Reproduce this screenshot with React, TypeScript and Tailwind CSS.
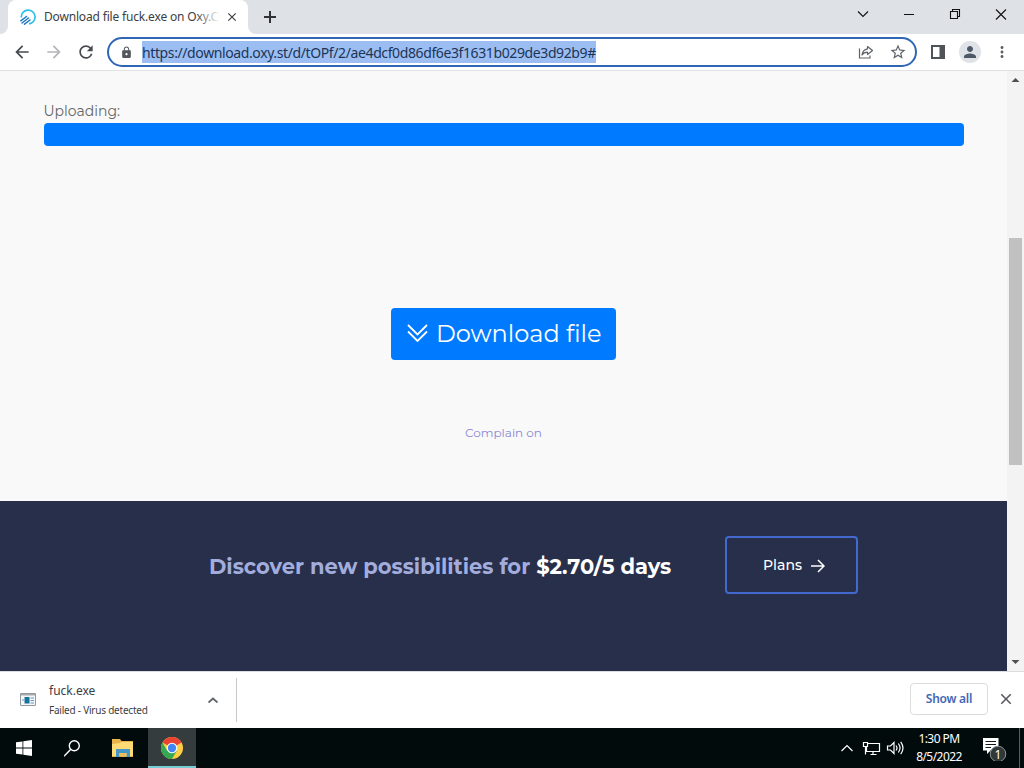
import React from 'react';
import {
  MdArrowBack,
  MdArrowForward,
  MdClose,
  MdLock,
  MdMoreVert,
  MdPerson,
  MdRefresh,
  MdStarBorder,
} from 'react-icons/md';

function SiteLogo() {
  return (
    <svg width="16" height="16" viewBox="0 0 16 16" fill="none" className="shrink-0">
      <path d="M1.300 8.500A6.900 6.900 0 1 1 9 14.800" stroke="#2cc0ea" strokeWidth="1.700" />
      <path d="M.8 11.800L6.500 7.500M2 14l6.500-5M4.500 15.200l5.500-4.200" stroke="#2079c2" strokeWidth="1.500" strokeLinecap="round" />
    </svg>
  );
}

function ShareIcon() {
  return (
    <svg width="16" height="16" viewBox="0 0 16 16" fill="none" stroke="#5f6368" strokeWidth="1.2">
      <path d="M1.500 4.500v9.500h10.500v-2.500" />
      <path d="M9.500 2.500l5 4-5 4V8.200c-2.500 0-4.200.8-5.500 2.800.4-3.500 2.200-5.600 5.500-6.200z" strokeLinejoin="round" />
    </svg>
  );
}

function TabStrip() {
  return (
    <div className="flex h-[34px] bg-[#dee1e6]">
      <div className="w-[8px] bg-white">
        <div className="h-full w-full rounded-br-lg bg-[#dee1e6]" />
      </div>
      <div className="bg-[#dee1e6]">
        <div className="flex h-full w-[240px] items-center rounded-t-lg bg-white pl-3">
          <SiteLogo />
          <div className="relative ml-2 w-[176px] overflow-hidden text-[12px] tracking-[-0.17px] whitespace-nowrap text-[#3c4043]">
            Download file fuck.exe on Oxy.Cl
            <div className="absolute inset-y-0 right-0 w-6 bg-linear-to-r from-transparent to-white" />
          </div>
          <MdClose className="ml-[5px] shrink-0 text-[#3c4043]" size={14} />
        </div>
      </div>
      <div className="w-[8px] bg-white">
        <div className="h-full w-full rounded-bl-lg bg-[#dee1e6]" />
      </div>
      <svg className="mt-[10px] ml-[7px]" width="14" height="14" viewBox="0 0 14 14" stroke="#303236" strokeWidth="2">
        <path d="M7 1v12M1 7h12" />
      </svg>
      <div className="ml-auto flex pt-[8px] pr-[16px]">
        <svg width="154" height="14" viewBox="0 0 154 14" fill="none" stroke="#111" strokeWidth="1.1">
          <path d="M4 3.500l5 5 5-5M50 6.500h10" />
          <path d="M96.500 3.500h7v7h-7zM98.500 3.500v-2h7v7h-2" />
          <path d="M142 1.500l10 10M152 1.500l-10 10" />
        </svg>
      </div>
    </div>
  );
}

function Toolbar() {
  return (
    <div className="flex h-[37px] items-center border-b border-[#dfe1e3] bg-white text-[#5f6368]">
      <MdArrowBack className="ml-3 text-[#46494d]" size={20} />
      <MdArrowForward className="ml-3 text-[#b3b5b8]" size={20} />
      <MdRefresh className="ml-3 text-[#46494d]" size={20} />
      <div className="ml-[11px] flex h-[30px] w-[810px] items-center rounded-full border-2 border-[#2f67b5] pl-[11px]">
        <MdLock className="text-[#54575b]" size={13} />
        <div className="ml-[9px] flex h-[22px] w-[454px] items-center bg-[#9bbdf2] text-[14px] tracking-[-0.39px] whitespace-nowrap text-[#1b3558]">
          https://download.oxy.st/d/tOPf/2/ae4dcf0d86df6e3f1631b029de3d92b9#
        </div>
        <div className="mr-[8px] ml-auto flex items-center gap-[15px]">
          <ShareIcon />
          <MdStarBorder size={18} />
        </div>
      </div>
      <svg className="ml-[14px]" width="14" height="14" viewBox="0 0 14 14">
        <path d="M1 1h12v12H1z" fill="none" stroke="#505357" strokeWidth="2" />
        <path d="M8.500 1H13v12H8.500z" fill="#505357" />
      </svg>
      <div className="ml-[14px] flex size-[22px] items-center justify-center rounded-full bg-[#dfe2e7]">
        <MdPerson size={18} className="text-[#4d5966]" />
      </div>
      <MdMoreVert className="ml-[12px]" size={18} />
    </div>
  );
}

function Scrollbar() {
  return (
    <div className="flex w-[17px] flex-col items-center bg-[#f3f3f3]">
      <svg width="17" height="17" viewBox="0 0 17 17">
        <path d="M4.500 11h8l-4-4z" fill="#505050" />
      </svg>
      <div className="mt-[150px] h-[227px] w-[13px] bg-[#c1c1c1]" />
      <svg className="mt-auto" width="17" height="17" viewBox="0 0 17 17">
        <path d="M4.500 6h8l-4 4z" fill="#505050" />
      </svg>
    </div>
  );
}

function Page() {
  return (
    <div className="flex w-[1007px] flex-col bg-[#f9f9f9] font-['Montserrat','Inter',sans-serif]">
      <div className="flex h-[430px] flex-col items-center pt-[29px]">
        <div className="w-[920px]">
          <div className="h-[23px] text-[14px] leading-[22px] tracking-[-0.02px] text-[#666]">Uploading:</div>
          <div className="h-[23px] rounded bg-[#007bff]" />
        </div>
        <button className="mt-[162px] flex h-[52px] w-[225px] items-center rounded bg-[#007bff] pl-[16px] text-[24px] whitespace-nowrap text-white">
          <svg width="22" height="20" viewBox="0 0 22 20" fill="none" stroke="currentColor" strokeWidth="1.8">
            <path d="M1 1l9.500 9.500L20 1M1 7.500l9.500 9.500L20 7.500" />
          </svg>
          <span className="ml-[7px]">Download file</span>
        </button>
        <div className="mt-[63px] text-[12px] leading-[20px] tracking-[-0.01px] text-[#8a87d6]">Complain on</div>
      </div>
      <div className="flex h-[170px] bg-[#282f4b] pt-[35px] pl-[209px]">
        <div className="h-[60px] w-[516px] text-[21px] leading-[62px] font-bold whitespace-nowrap text-[#a3addd]">
          Discover new possibilities for <span className="text-white">$2.70/5 days</span>
        </div>
        <div className="flex h-[58px] w-[133px] items-center rounded border-2 border-[#4169cf] pl-[36px] text-[14px] font-medium text-white">
          <span>Plans</span>
          <svg className="mt-[2px] ml-[9px]" width="14" height="14" viewBox="0 0 14 14" fill="none" stroke="currentColor" strokeWidth="1.5">
            <path d="M0 7h13M7 1l6 6-6 6" />
          </svg>
        </div>
      </div>
    </div>
  );
}

function DownloadShelf() {
  return (
    <div className="flex h-[57px] items-center border-t border-[#dcdde0] bg-white">
      <svg className="-mt-[2px] ml-5" width="16" height="13" viewBox="0 0 16 13">
        <path d="M.5.500h15v12H.500z" fill="#f5f7f8" stroke="#92999e" />
        <path d="M1 1h14v1.500H1z" fill="#a6abae" />
        <path d="M4.500 4h5v6.500h-5z" fill="#16739f" />
        <path d="M10.500 5h3.500M10.500 7.500h3.500M10.500 10h3.500M2 7h2" stroke="#689bc1" />
      </svg>
      <div className="ml-[13px] w-[157px]">
        <div className="text-[12px] leading-[18px] text-[#3c4043]">fuck.exe</div>
        <div className="mt-[2px] text-[10px] leading-[16px] tracking-[-0.22px] text-[#3c4043]">Failed - Virus detected</div>
      </div>
      <svg className="ml-[2px]" width="10" height="6" viewBox="0 0 10 6" fill="none" stroke="#5f6368" strokeWidth="1.8">
        <path d="M.5 5.500l4.500-4 4.500 4" />
      </svg>
      <div className="ml-[18px] h-[44px] w-px bg-[#c7c9cc]" />
      <div className="-mt-[2px] ml-auto flex h-[32px] w-[78px] items-center justify-center rounded border border-[#dadce0] text-[12px] font-semibold tracking-[-0.25px] text-[#4267b5]">
        Show all
      </div>
      <MdClose className="-mt-[2px] mr-[9px] ml-[9px] text-[#54575b]" size={18} />
    </div>
  );
}

function Taskbar() {
  return (
    <div className="flex h-[40px] items-center bg-[#020b0c] text-white">
      <svg className="ml-4" width="16" height="16" viewBox="0 0 16 16" fill="currentColor">
        <path d="M0 2.300l6.500-.9v6.100H0zM7.300 1.300L16 0v7.500H7.300zM0 8.400h6.500v6.200L0 13.700zM7.300 8.400H16V16l-8.700-1.200z" />
      </svg>
      <svg className="ml-[32px]" width="16" height="17" viewBox="0 0 16 17" fill="none" stroke="currentColor" strokeWidth="1.400">
        <circle cx="10.300" cy="5.800" r="5" />
        <path d="M6.800 9.300L0 16.200" />
      </svg>
      <svg className="ml-[32px]" width="22" height="18" viewBox="0 0 22 18">
        <path d="M0 0h8l1.500 2H21v16H0z" fill="#e8b44b" />
        <path d="M0 5l8-1 2-1h11v14H0z" fill="#ffdb76" />
        <path d="M4 10h14v8h-3.500v-4h-7v4H4z" fill="#4497c7" />
        <path d="M7.500 14h7v3h-7z" fill="#efbe58" />
      </svg>
      <div className="ml-[14px] flex h-full w-[48px] items-center justify-center border-b-2 border-[#76cbd5] bg-[#343c3d] pt-[2px]">
        <svg width="22" height="22" viewBox="0 0 22 22">
          <circle cx="11" cy="11" r="11" fill="#ffcf42" />
          <path d="M11 11L1.470 5.500A11 11 0 0 1 20.530 5.500z" fill="#ea4335" />
          <path d="M1.470 5.500A11 11 0 0 0 11 22l4.800-8.200L11 11 6.200 13.800z" fill="#34a853" />
          <circle cx="11" cy="11" r="5.300" fill="#fff" />
          <circle cx="11" cy="11" r="4.200" fill="#4285f4" />
        </svg>
      </div>
      <svg className="ml-auto" width="64" height="18" viewBox="0 0 64 18" fill="none" stroke="currentColor" strokeWidth="1.200">
        <path d="M1.500 12l5.500-5.500 5.500 5.500" />
        <path d="M28 4.500h11.500v8H26.500V8M23.500 3.500h4v4h-4zM25.500 8v7.500M30.500 15.500h6M33 13v2.500" />
        <path d="M47.500 7h3L54 3.500v11L50.500 11h-3zM56 6.500q2 2.500 0 5M58.300 4.500q3.500 4.500 0 9M60.700 2.800q4.600 6.200 0 12.400" />
      </svg>
      <div className="ml-[4px] w-[62px] text-center text-[12px] leading-[18px] tracking-[-0.550px] whitespace-nowrap">
        <div>1:30 PM</div>
        <div>8/5/2022</div>
      </div>
      <svg className="ml-[12px]" width="26" height="26" viewBox="0 0 26 26">
        <path d="M1 3h15.500v12.500H8.500L5 19v-3.500H1z" fill="#fff" />
        <path d="M3.500 6.500H14M3.500 9.500H14M3.500 12.500H9" stroke="#10191a" strokeWidth="1.200" />
        <circle cx="16" cy="19" r="7.800" fill="#30383a" stroke="#8b9192" />
        <text x="16" y="23.500" fill="#fff" fontSize="12" textAnchor="middle">1</text>
      </svg>
      <div className="ml-[11px] h-full w-px bg-[#596162]" />
      <div className="w-[4px]" />
    </div>
  );
}

export default function App() {
  return (
    <div className="flex h-[768px] w-[1024px] flex-col overflow-hidden font-['Segoe_UI','Noto_Sans',sans-serif]">
      <TabStrip />
      <Toolbar />
      <div className="flex h-[600px]">
        <Page />
        <Scrollbar />
      </div>
      <DownloadShelf />
      <Taskbar />
    </div>
  );
}
